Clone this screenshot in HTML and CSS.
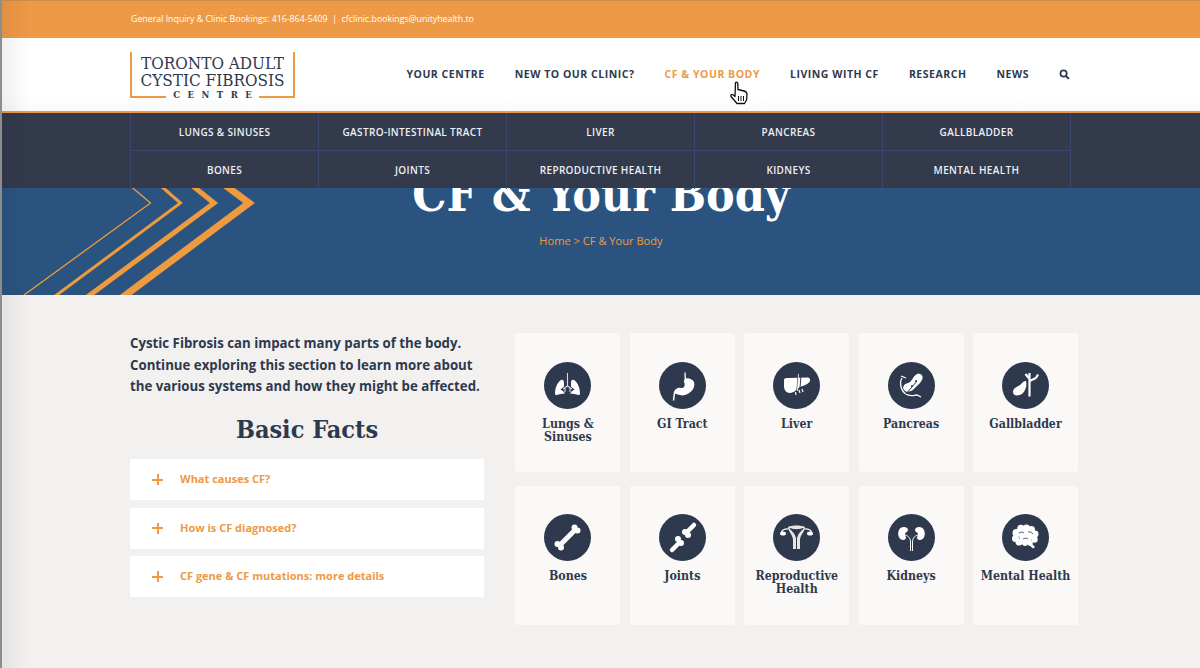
FILE: index.html
```html
<!DOCTYPE html>
<html>
<head>
  <meta charset="UTF-8">
  <title>CF &amp; Your Body</title>
  <link rel="stylesheet" href="styles.css">
</head>
<body>

<div class="topbar">
  <div class="wrap">General Inquiry &amp; Clinic Bookings: 416-864-5409 &nbsp;|&nbsp; cfclinic.bookings@unityhealth.to</div>
</div>

<header class="header">
  <div class="wrap header-row">
    <div class="logo">
      <div class="logo-name">TORONTO ADULT</div>
      <div class="logo-name">CYSTIC FIBROSIS</div>
      <div class="logo-sub"><span>CENTRE</span></div>
    </div>
    <nav class="nav">
      <a>YOUR CENTRE</a>
      <a>NEW TO OUR CLINIC?</a>
      <a class="active">CF &amp; YOUR BODY</a>
      <a>LIVING WITH CF</a>
      <a>RESEARCH</a>
      <a>NEWS</a>
      <svg class="search" viewBox="0 0 12 12"><circle cx="5" cy="5" r="3.4" fill="none" stroke="#2f394d" stroke-width="1.9"/><path d="M7.6 7.6L10.8 10.8" stroke="#2f394d" stroke-width="2.2"/></svg>
    </nav>
  </div>
</header>

<section class="hero">
  <svg class="chevrons" viewBox="0 0 300 182">
    <g fill="none" stroke="#ee9a3e" stroke-linejoin="miter">
      <path d="M122 66L150.500 90L24 182" stroke-width="1.300"/>
      <path d="M153 66L180.500 90L54 184" stroke-width="3"/>
      <path d="M184 66L214 90L86 185" stroke-width="5"/>
      <path d="M217 66L249 90L119 187" stroke-width="7"/>
    </g>
  </svg>
  <h1>CF &amp; Your Body</h1>
  <div class="crumbs">Home &gt; CF &amp; Your Body</div>
  <div class="submenu">
    <div class="submenu-grid">
      <a>LUNGS &amp; SINUSES</a>
      <a>GASTRO-INTESTINAL TRACT</a>
      <a>LIVER</a>
      <a>PANCREAS</a>
      <a>GALLBLADDER</a>
      <a>BONES</a>
      <a>JOINTS</a>
      <a>REPRODUCTIVE HEALTH</a>
      <a>KIDNEYS</a>
      <a>MENTAL HEALTH</a>
    </div>
  </div>
</section>

<main class="wrap content">
  <div class="left">
    <p class="intro">Cystic Fibrosis can impact many parts of the body. Continue exploring this section to learn more about the various systems and how they might be affected.</p>
    <h2>Basic Facts</h2>
    <div class="facts">
      <div class="fact"><span class="plus"></span>What causes CF?</div>
      <div class="fact"><span class="plus"></span>How is CF diagnosed?</div>
      <div class="fact"><span class="plus"></span>CF gene &amp; CF mutations: more details</div>
    </div>
  </div>

  <div class="cards">
    <div class="card">
      <svg class="icon" viewBox="0 0 47 47"><circle cx="23.500" cy="23.500" r="23.500" fill="#2f394d"/>
        <path d="M11 31.500C11 26 13.500 20 17 18C19 17 20 18.500 20 21L20 24.500L16.500 27.500L19.500 29.500L21 31.500C17 31.500 14 33 12 33Q11 33 11 31.500Z" fill="#fff"/>
        <path d="M36 31.500C36 26 33.500 20 30 18C28 17 27 18.500 27 21L27 24.500L30.500 27.500L27.500 29.500L26 31.500C30 31.500 33 33 35 33Q36 33 36 31.500Z" fill="#fff"/>
        <path d="M23.500 11V24M23.500 24L19 27M23.500 24L28 27M21 26L21 30M26 26L26 30" stroke="#d8dade" stroke-width="1.100" fill="none"/></svg>
      <div class="card-title">Lungs &amp; Sinuses</div>
    </div>
    <div class="card">
      <svg class="icon" viewBox="0 0 47 47"><circle cx="23.500" cy="23.500" r="23.500" fill="#2f394d"/>
        <path d="M26 10.500L26.300 17" stroke="#fff" stroke-width="1.300" fill="none"/>
        <path d="M25.500 17C28 15.500 33 16.500 35 20C36.500 25 33 31 26 33C21 34.500 17 31 14.500 32C15 27 19 25 22 26C25.500 26.500 26.500 23 25 20Q25 18 25.500 17Z" fill="#fff"/>
        <path d="M15.300 32L14.500 38.500" stroke="#fff" stroke-width="1.500" fill="none"/></svg>
      <div class="card-title">GI Tract</div>
    </div>
    <div class="card">
      <svg class="icon" viewBox="0 0 47 47"><circle cx="23.500" cy="23.500" r="23.500" fill="#2f394d"/>
        <path d="M11 18Q11 16 14 16L35 15.500Q37.500 16 37 19C36 22 30 24 27 25C24 27 21 31 17 31C13 31 11 28 11 24Z" fill="#fff"/>
        <path d="M25 13L24 28M28 13L27 26" stroke="#2f394d" stroke-width="1" fill="none"/>
        <path d="M25.500 12L24.500 29" stroke="#fff" stroke-width=".8" fill="none"/>
        <path d="M22.500 30L23 33M26 28L27 31M29 27L30 30" stroke="#fff" stroke-width="1.200" fill="none"/></svg>
      <div class="card-title">Liver</div>
    </div>
    <div class="card">
      <svg class="icon" viewBox="0 0 47 47"><circle cx="23.500" cy="23.500" r="23.500" fill="#2f394d"/>
        <path d="M29 12C33 11 36 14 34 18C32 22 28 24 26 27C23 30 18 31 16 28C14 25 16 22 20 21C24 20 25 14 29 12Z" fill="#fff"/>
        <path d="M14 16C11 21 13 29 18 32C22 35 26 33 29 33L33 35" fill="none" stroke="#fff" stroke-width="1.300"/>
        <path d="M18 32L29 19" fill="none" stroke="#2f394d" stroke-width="1"/>
        <path d="M13 14L18 16" fill="none" stroke="#fff" stroke-width="1.300"/>
        <circle cx="24" cy="24" r="1" fill="#2f394d"/><circle cx="28" cy="19" r="1" fill="#2f394d"/></svg>
      <div class="card-title">Pancreas</div>
    </div>
    <div class="card">
      <svg class="icon" viewBox="0 0 47 47"><circle cx="23.500" cy="23.500" r="23.500" fill="#2f394d"/>
        <path d="M27.500 11V34.500M27.500 19L34 16M34 16L36 12.500M27.500 17L23.500 12" stroke="#fff" stroke-width="2.200" fill="none"/>
        <path d="M24 19C25 22 24.500 28 20 32C17 34 11 34.500 11 30C11 26 15 25 18 23C20 21.500 21 19 24 19Z" fill="#fff"/></svg>
      <div class="card-title">Gallbladder</div>
    </div>
    <div class="card">
      <svg class="icon" viewBox="0 0 47 47"><circle cx="23.500" cy="23.500" r="23.500" fill="#2f394d"/>
        <path d="M16.500 30.500L30.500 16.500" stroke="#fff" stroke-width="5"/>
        <circle cx="30.500" cy="13.500" r="3" fill="#fff"/><circle cx="33.500" cy="16.500" r="3" fill="#fff"/>
        <circle cx="13.500" cy="30" r="3" fill="#fff"/><circle cx="17" cy="33.500" r="3" fill="#fff"/></svg>
      <div class="card-title">Bones</div>
    </div>
    <div class="card">
      <svg class="icon" viewBox="0 0 47 47"><circle cx="23.500" cy="23.500" r="23.500" fill="#2f394d"/>
        <path d="M27 19L35 11" stroke="#fff" stroke-width="4.500" stroke-linecap="round"/>
        <circle cx="26" cy="18" r="3" fill="#fff"/><circle cx="29" cy="21" r="3" fill="#fff"/>
        <path d="M20 29L13 36" stroke="#fff" stroke-width="4.500" stroke-linecap="round"/>
        <circle cx="19" cy="25" r="3" fill="#fff"/><circle cx="22" cy="29" r="3" fill="#fff"/></svg>
      <div class="card-title">Joints</div>
    </div>
    <div class="card">
      <svg class="icon" viewBox="0 0 47 47"><circle cx="23.500" cy="23.500" r="23.500" fill="#2f394d"/>
        <path d="M15 13C19 11 28 11 32 13C32 17 28 20 27 25L27 35L20 35L20 25C19 20 15 17 15 13Z" fill="#e9e6e2"/>
        <path d="M17 14.500C20 18 22 19 23.500 24C25 19 27 18 30 14.500C27 16 20 16 17 14.500ZM23.500 24V35" stroke="#2f394d" stroke-width="1" fill="#2f394d"/>
        <path d="M15.500 15C12 14.500 9 16 8.500 18M31.500 15C35 14.500 38 16 38.500 18" stroke="#fff" stroke-width="1.200" fill="none"/>
        <ellipse cx="10" cy="19.500" rx="3" ry="2" fill="#fff"/><ellipse cx="37" cy="19.500" rx="3" ry="2" fill="#fff"/></svg>
      <div class="card-title">Reproductive Health</div>
    </div>
    <div class="card">
      <svg class="icon" viewBox="0 0 47 47"><circle cx="23.500" cy="23.500" r="23.500" fill="#2f394d"/>
        <path d="M16 13C11 13 9.500 18 10.500 22C11.500 26 16 27 17.500 25C19 23 16.500 22 17 20C17.500 18 20 18 20 16C20 14 18 13 16 13Z" fill="#fff"/>
        <path d="M31 13C36 13 37.500 18 36.500 22C35.500 26 31 27 29.500 25C28 23 30.500 22 30 20C29.500 18 27 18 27 16C27 14 29 13 31 13Z" fill="#fff"/>
        <path d="M17 21C21 22 22.500 25 22.500 28V37M30 21C26 22 24.500 25 24.500 28V37" stroke="#fff" stroke-width="1" fill="none"/></svg>
      <div class="card-title">Kidneys</div>
    </div>
    <div class="card">
      <svg class="icon" viewBox="0 0 47 47"><circle cx="23.500" cy="23.500" r="23.500" fill="#2f394d"/>
        <g fill="#fff">
          <circle cx="14.500" cy="19" r="4"/><circle cx="13.500" cy="24.500" r="3.500"/><circle cx="17" cy="28" r="3.500"/>
          <circle cx="19" cy="14.500" r="3.800"/><circle cx="24.500" cy="14" r="3.500"/><circle cx="29.500" cy="15.500" r="3.500"/>
          <circle cx="33" cy="20" r="3.500"/><circle cx="32.500" cy="25.500" r="3.200"/><circle cx="23" cy="29" r="3"/>
          <circle cx="28" cy="29" r="2.800"/><circle cx="24" cy="21.500" r="7"/>
          <path d="M29 29L33 33L31 34.500L27 31Z"/>
        </g>
        <path d="M17 19Q20 17 22 19M26 18Q29 17 31 20M21 25Q24 23 26 25" stroke="#2f394d" stroke-width=".8" fill="none"/></svg>
      <div class="card-title">Mental Health</div>
    </div>
  </div>
</main>

<!-- mouse pointer caught in the shot -->
<svg class="pointer" viewBox="0 0 20 24">
  <path d="M6.500 1.500C7.500 .8 8.700 1.300 8.800 2.500L9 8.500L15 10C17 10.500 18 11.500 18 13.500L17.500 19L15.500 22.500L8 22.500L2 15.500C1.200 14 2.700 12.800 4 13.800L6 15.500Z" fill="#fff" stroke="#111" stroke-width="1.300" stroke-linejoin="round"/>
  <path d="M9.500 15V20M12 15V20M14.500 15V20" stroke="#111" stroke-width="1"/>
</svg>

</body>
</html>
```

FILE: styles.css
```css
body {
  margin: 0;
  height: 668px;
  overflow: hidden;
  background: #f2f1ef;
  font-family: "Open Sans", sans-serif;
  color: #2f394d;
  border-left: 2px solid #8d8d8d;
  box-sizing: border-box;
}

/* soft shadow of the window edge */
body::after {
  content: "";
  position: absolute;
  left: 2px;
  top: 0;
  width: 28px;
  height: 668px;
  background: linear-gradient(to right, rgba(0, 0, 0, .06), rgba(0, 0, 0, 0));
  pointer-events: none;
}

.wrap {
  width: 940px;
  margin-left: 128px;
}

.topbar {
  height: 38px;
  box-sizing: border-box;
  border-top: 1px solid #d08d4c;
  background: #ee9946;
  color: #fff;
  font-size: 8.800px;
  line-height: 36px;
}

.topbar .wrap {
  padding-left: 1px;
  box-sizing: border-box;
}

.header {
  height: 73px;
  background: linear-gradient(#fff 75%, #fafafa);
  border-bottom: 2px solid #ee9946;
}

.header-row {
  display: flex;
  align-items: flex-start;
  justify-content: space-between;
}

.logo {
  width: 161px;
  height: 43px;
  margin-top: 14px;
  padding-top: 3px;
  border: solid #ee9946;
  border-width: 0 2px;
  text-align: center;
  font-family: "DejaVu Serif Condensed", "DejaVu Serif", serif;
}

.logo-name {
  font-size: 17px;
  line-height: 17px;
}

.logo-sub {
  display: flex;
  justify-content: space-between;
  align-items: center;
  font-size: 9.500px;
  font-weight: bold;
  line-height: 11px;
  margin-top: -.500px;
}

.logo-sub span {
  letter-spacing: 7.500px;
  margin-right: -7.500px;
}

.logo-sub::before, .logo-sub::after {
  content: "";
  width: 34px;
  height: 2px;
  background: #ee9946;
  margin-top: 5px;
}

.nav {
  display: flex;
  align-items: center;
  gap: 30px;
  height: 72px;
  font-size: 10.500px;
  font-weight: 700;
  letter-spacing: .53px;
}

.nav .active {
  color: #ee9946;
}

.search {
  width: 11px;
  height: 11px;
}

.hero {
  position: relative;
  height: 182px;
  overflow: hidden;
  background: #2a547f;
  text-align: center;
  color: #fff;
}

.chevrons {
  position: absolute;
  left: -2px;
  top: 0;
  width: 300px;
  height: 182px;
}

.hero h1 {
  position: relative;
  margin: 0;
  padding-top: 64px;
  font-family: "DejaVu Serif Condensed", "DejaVu Serif", serif;
  font-size: 47.800px;
  line-height: 34px;
  font-weight: bold;
}

.crumbs {
  position: relative;
  margin-top: 23px;
  font-size: 11.100px;
  line-height: 13px;
  color: #f09a3e;
}

.submenu {
  position: absolute;
  left: 0;
  right: 0;
  top: 0;
  height: 75px;
  background: #323a4c;
}

.submenu-grid {
  display: grid;
  grid-template-columns: repeat(5, 188px);
  grid-auto-rows: 38px;
  width: 941px;
  margin-left: 128px;
  border-left: 1px solid #38486a;
  box-sizing: border-box;
}

.submenu-grid a {
  border-right: 1px solid #38486a;
  border-bottom: 1px solid #38486a;
  font-size: 10px;
  font-weight: 600;
  letter-spacing: .35px;
  line-height: 38px;
  text-align: center;
  color: #eef0f2;
}

.submenu-grid a:nth-child(n+6) {
  border-bottom: 0;
}

.content {
  display: flex;
  justify-content: space-between;
  width: 948px;
  padding-top: 38px;
}

.left {
  width: 354px;
}

.intro {
  margin: 0;
  font-size: 13.250px;
  font-weight: 700;
  line-height: 21.500px;
}

h2 {
  margin: 15.500px 0 12px;
  text-align: center;
  font-family: "DejaVu Serif Condensed", "DejaVu Serif", serif;
  font-size: 25px;
  line-height: 34px;
}

.facts {
  display: flex;
  flex-direction: column;
  gap: 7.500px;
}

.fact {
  display: flex;
  align-items: center;
  height: 41px;
  box-sizing: border-box;
  padding-bottom: 2px;
  background: #fff;
  color: #ee9946;
  font-size: 11px;
  font-weight: 700;
}

.plus {
  width: 11px;
  height: 11px;
  margin: 2px 17px 0 22px;
  background: linear-gradient(#ee9946, #ee9946) center / 100% 2px no-repeat,
    linear-gradient(#ee9946, #ee9946) center / 2px 100% no-repeat;
}

.cards {
  display: grid;
  grid-template-columns: repeat(5, 105px);
  grid-auto-rows: 139px;
  column-gap: 9.400px;
  row-gap: 14px;
}

.card {
  background: #faf9f7;
  border-radius: 2px;
  padding-top: 29px;
  box-sizing: border-box;
  text-align: center;
}

.card:nth-child(n+6) {
  padding-top: 28px;
}

.icon {
  display: block;
  width: 47px;
  height: 47px;
  margin: 0 auto 8px;
}

.card-title {
  padding: 0 3px;
  font-family: "DejaVu Serif Condensed", "DejaVu Serif", serif;
  font-size: 12.300px;
  font-weight: bold;
  line-height: 13px;
}

.pointer {
  position: absolute;
  left: 729px;
  top: 81px;
  width: 20px;
  height: 24px;
}
```
